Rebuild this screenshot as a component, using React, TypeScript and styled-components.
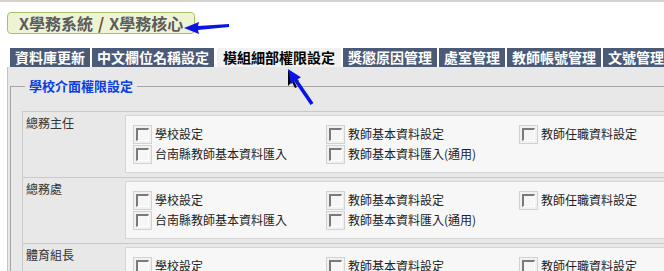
import React from 'react'
import styled, { createGlobalStyle } from 'styled-components'

const GlobalStyle = createGlobalStyle`
  html, body {
    margin: 0;
    padding: 0;
    background: #fff;
    overflow: hidden;
  }
  body {
    font-family: "Noto Sans CJK TC", "Noto Sans", sans-serif;
  }
`

const Page = styled.div`
  position: relative;
  width: 664px;
  height: 271px;
  overflow: hidden;
`

const TopEdge = styled.div`
  height: 2px;
  background: #d6d3ce;
`

const TitleBar = styled.div`
  display: flex;
  padding: 10px 0 0 7px;
`

const Crumb = styled.div`
  height: 20px;
  line-height: 20px;
  padding: 0 11px;
  border: 1px solid #a9c064;
  border-radius: 4px;
  background: #eef3d4;
  font-size: 16px;
  font-weight: bold;
  color: #5c5c5c;
  white-space: nowrap;
`

const Slash = styled.span`
  color: #6b4a1e;
  margin: 0 5px;
`

const TabBar = styled.div`
  display: flex;
  gap: 2px;
  margin: 14px 0 0 10px;
  white-space: nowrap;
`

const Tab = styled.div<{ $active?: boolean }>`
  flex: none;
  height: 19px;
  line-height: 19px;
  padding: ${p => (p.$active ? '0 6px' : '0 5px')};
  margin-left: ${p => (p.$active ? '1px' : '0')};
  font-size: 14px;
  font-weight: bold;
  background: ${p => (p.$active ? '#f1f1f1' : '#4a5a77')};
  color: ${p => (p.$active ? '#000' : '#fff')};
`

const Panel = styled.div`
  margin-left: 7px;
  width: 720px;
  height: 220px;
  background: #e8e8e8;
  border-left: 1px solid #c4c4c4;
  padding: 11px 0 0 2px;
  box-sizing: border-box;
`

const Group = styled.fieldset`
  margin: 0;
  padding: 17px 0 0 11px;
  border: 1px solid #a5a5a5;
  border-right: none;
  border-bottom: none;
`

const Legend = styled.legend`
  margin-left: 3px;
  padding: 0 4px;
  font-size: 13px;
  line-height: 16px;
  font-weight: bold;
  color: #0a3ee0;
`

const Table = styled.div`
  border-left: 1px solid #c9c9c9;
`

const Row = styled.div`
  display: flex;
  border-top: 1px solid #c9c9c9;
  padding: 3px 0 4px;
`

const RoleName = styled.div`
  flex: none;
  width: 99px;
  padding-left: 3px;
  font-size: 12px;
  line-height: 16px;
  color: #333;
`

const Options = styled.div`
  flex: none;
  width: 600px;
  height: 48px;
  padding: 8px 0 0 7px;
  border: 1px solid #d6d6d6;
  background: #f7f7f7;
  display: grid;
  grid-template-columns: repeat(3, 193px);
  grid-auto-rows: 20px;
  align-content: start;
`

const Option = styled.label`
  display: flex;
  align-items: center;
  gap: 3px;
  font-size: 12px;
  line-height: 16px;
  color: #222;
  white-space: nowrap;
`

const Check = styled.span`
  position: relative;
  flex: none;
  width: 17px;
  height: 17px;
  border: 1px solid #d2d2d2;
  background: #f1f1f1;

  &::before {
    content: '';
    position: absolute;
    left: 2px;
    top: 2px;
    width: 10px;
    height: 10px;
    border-top: 2px solid #7a7a7a;
    border-left: 2px solid #7a7a7a;
    border-right: 1px solid #fff;
    border-bottom: 1px solid #fff;
    background: #f6f6f6;
  }
`

const Overlay = styled.svg`
  position: absolute;
  left: 0;
  top: 0;
  pointer-events: none;
`

const tabs = ['資料庫更新', '中文欄位名稱設定', '模組細部權限設定', '獎懲原因管理', '處室管理', '教師帳號管理', '文號管理']

const roles = ['總務主任', '總務處', '體育組長']

const options = ['學校設定', '教師基本資料設定', '教師任職資料設定', '台南縣教師基本資料匯入', '教師基本資料匯入(通用)']

export default function App() {
  return (
    <Page>
      <GlobalStyle />
      <TopEdge />
      <TitleBar>
        <Crumb>
          X學務系統<Slash>/</Slash>X學務核心
        </Crumb>
      </TitleBar>
      <TabBar>
        {tabs.map((t, i) => (
          <Tab key={t} $active={i === 2}>{t}</Tab>
        ))}
      </TabBar>
      <Panel>
        <Group>
          <Legend>學校介面權限設定</Legend>
          <Table>
            {roles.map(r => (
              <Row key={r}>
                <RoleName>{r}</RoleName>
                <Options>
                  {options.map(o => (
                    <Option key={o}>
                      <Check />
                      {o}
                    </Option>
                  ))}
                </Options>
              </Row>
            ))}
          </Table>
        </Group>
      </Panel>
      <Overlay width="664" height="271" viewBox="0 0 664 271">
        <polygon points="184,28 199,22 198,26 229,24 229,27 198,30 199,34" fill="#0a14e6" />
        <polygon
          points="288,70 288,86 292,82 295,88 297,87 294,81 299,81"
          fill="#000"
        />
        <polygon
          points="288,69 300.9,77.2 297.4,79.6 313.5,103 310.5,105 294.4,81.6 291,84"
          fill="#0a14e6"
        />
      </Overlay>
    </Page>
  )
}
